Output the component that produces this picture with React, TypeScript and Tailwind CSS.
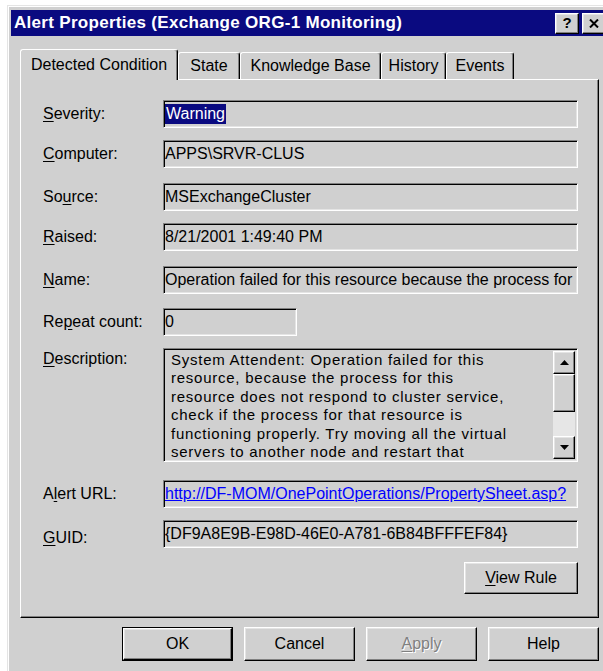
import React from "react";

const FACE = "bg-[#d0d0d0]";
const RAISED =
  "border border-t-white border-l-white border-b-black border-r-black shadow-[inset_-1px_-1px_0_#808080,inset_1px_1px_0_#e4e4e4]";
const SUNKEN =
  "border border-t-[#808080] border-l-[#808080] border-b-white border-r-white shadow-[inset_1px_1px_0_#000,inset_-1px_-1px_0_#e4e4e4]";

function Key({ children }: { children: React.ReactNode }) {
  return <span className="underline underline-offset-[2px]">{children}</span>;
}

function Field({
  children,
  className = "",
}: {
  children: React.ReactNode;
  className?: string;
}) {
  return (
    <div
      className={`flex h-[28px] items-center overflow-hidden whitespace-nowrap px-[1px] ${SUNKEN} ${className}`}
    >
      {children}
    </div>
  );
}

function Row({
  label,
  children,
  className = "",
}: {
  label: React.ReactNode;
  children: React.ReactNode;
  className?: string;
}) {
  return (
    <div className={`flex items-center ${className}`}>
      <div className="w-[120px] shrink-0">{label}</div>
      {children}
    </div>
  );
}

function Arrow({ down = false }: { down?: boolean }) {
  return (
    <svg width="9" height="5" viewBox="0 0 9 5" className={down ? "rotate-180" : ""}>
      <polygon points="4.5,0 9,5 0,5" fill="#000" />
    </svg>
  );
}

function ScrollBar() {
  return (
    <div className="flex w-[22px] shrink-0 flex-col">
      <div className={`flex h-[23px] items-center justify-center ${FACE} ${RAISED}`}>
        <Arrow />
      </div>
      <div className={`h-[38px] ${FACE} ${RAISED}`} />
      <div className="flex-1 bg-[#e6e6e6]" />
      <div className={`flex h-[23px] items-center justify-center ${FACE} ${RAISED}`}>
        <Arrow down />
      </div>
    </div>
  );
}

const DESCRIPTION = [
  "System Attendent: Operation failed for this",
  "resource, because the process for this",
  "resource does not respond to cluster service,",
  "check if the process for that resource is",
  "functioning properly. Try moving all the virtual",
  "servers to another node and restart that",
];

const TABS = [
  { name: "State", w: "w-[62px]" },
  { name: "Knowledge Base", w: "w-[141px]" },
  { name: "History", w: "w-[65px]" },
  { name: "Events", w: "w-[68px]" },
];

function DialogButton({
  children,
  isDefault = false,
  disabled = false,
}: {
  children: React.ReactNode;
  isDefault?: boolean;
  disabled?: boolean;
}) {
  const label = (
    <span
      className={
        disabled ? "text-[#808080] [text-shadow:1px_1px_0_#fff]" : "text-black"
      }
    >
      {children}
    </span>
  );
  if (isDefault) {
    return (
      <div className="h-[34px] w-[111px] border border-black">
        <div className={`flex h-full items-center justify-center ${FACE} ${RAISED}`}>
          {label}
        </div>
      </div>
    );
  }
  return (
    <div className={`flex h-[34px] w-[111px] items-center justify-center ${FACE} ${RAISED}`}>
      {label}
    </div>
  );
}

export default function App() {
  return (
    <div className="h-[671px] w-[603px] overflow-hidden bg-white font-['Liberation_Sans',Arial,sans-serif] text-[16px] leading-[20px] text-black">
      <div
        className={`ml-[7px] mt-[5px] h-[700px] w-[620px] border-l border-t border-[#e4e4e4] pl-[3px] pt-[4px] shadow-[inset_1px_1px_0_#fff] ${FACE}`}
      >
        {/* caption */}
        <div className="flex h-[26px] w-[597px] items-center justify-between bg-[#0a0a80] pl-[3px] pr-[2px]">
          <span className="text-[17px] font-bold tracking-[0.3px] text-white">
            Alert Properties (Exchange ORG-1 Monitoring)
          </span>
          <div className="flex gap-[3px]">
            <div
              className={`flex h-[21px] w-[24px] items-center justify-center text-[15px] font-bold ${FACE} ${RAISED}`}
            >
              ?
            </div>
            <div className={`flex h-[21px] w-[24px] items-center justify-center ${FACE} ${RAISED}`}>
              <svg width="10" height="9" viewBox="0 0 10 9">
                <path d="M1 0.5 L9 8.5 M9 0.5 L1 8.5" stroke="#000" strokeWidth="2" />
              </svg>
            </div>
          </div>
        </div>

        {/* tab strip */}
        <div className="ml-[9px] mt-[13px] w-[579px]">
          <div className="flex h-[30px] items-end">
            <div
              className={`relative z-10 -mb-[1px] flex h-[31px] w-[158px] items-start justify-center rounded-t-[3px] border-l border-t border-r border-l-white border-t-white border-r-black pt-[5px] shadow-[inset_-1px_0_0_#808080] ${FACE}`}
            >
              Detected Condition
            </div>
            {TABS.map((t) => (
              <div
                key={t.name}
                className={`flex h-[27px] items-start justify-center rounded-t-[3px] border-l border-t border-r border-l-white border-t-white border-r-black pt-[3px] shadow-[inset_-1px_0_0_#808080] ${t.w} ${FACE}`}
              >
                {t.name}
              </div>
            ))}
          </div>

          {/* page */}
          <div
            className={`h-[539px] border border-t-white border-l-white border-b-black border-r-black pl-[22px] pr-[20px] pt-[20px] shadow-[inset_-1px_-1px_0_#808080] ${FACE}`}
          >
            <Row label={<><Key>S</Key>everity:</>}>
              <Field className="flex-1">
                <span className="bg-[#0a0a80] px-[1px] leading-[20px] text-white">Warning</span>
              </Field>
            </Row>
            <Row className="mt-[12px]" label={<><Key>C</Key>omputer:</>}>
              <Field className="flex-1">APPS\SRVR-CLUS</Field>
            </Row>
            <Row className="mt-[15px]" label={<>So<Key>u</Key>rce:</>}>
              <Field className="flex-1">MSExchangeCluster</Field>
            </Row>
            <Row className="mt-[12px]" label={<><Key>R</Key>aised:</>}>
              <Field className="flex-1">8/21/2001 1:49:40 PM</Field>
            </Row>
            <Row className="mt-[15px]" label={<><Key>N</Key>ame:</>}>
              <Field className="flex-1">
                Operation failed for this resource because the process for
              </Field>
            </Row>
            <Row className="mt-[14px]" label={<>Re<Key>p</Key>eat count:</>}>
              <Field className="w-[134px]">0</Field>
            </Row>
            <div className="mt-[12px] flex items-start">
              <div className="w-[120px] shrink-0 pt-[1px]">
                <Key>D</Key>escription:
              </div>
              <div className={`flex h-[114px] flex-1 overflow-hidden p-[2px] ${SUNKEN}`}>
                <div className="flex-1 overflow-hidden pl-[5px] text-[15px] leading-[18.4px] tracking-[0.75px]">
                  {DESCRIPTION.map((line) => (
                    <div key={line} className="whitespace-nowrap">
                      {line}
                    </div>
                  ))}
                </div>
                <ScrollBar />
              </div>
            </div>
            <Row className="mt-[18px]" label={<>A<Key>l</Key>ert URL:</>}>
              <Field className="flex-1">
                <span className="text-[#0000ff] underline">
                  http://DF-MOM/OnePointOperations/PropertySheet.asp?
                </span>
              </Field>
            </Row>
            <Row
              className="mt-[12px]"
              label={
                <span className="relative top-[4px]">
                  <Key>G</Key>UID:
                </span>
              }
            >
              <Field className="flex-1">{"{DF9A8E9B-E98D-46E0-A781-6B84BFFFEF84}"}</Field>
            </Row>
            <div className="mt-[14px] flex justify-end">
              <div className={`flex h-[32px] w-[114px] items-center justify-center ${FACE} ${RAISED}`}>
                <span>
                  <Key>V</Key>iew Rule
                </span>
              </div>
            </div>
          </div>
        </div>

        {/* dialog buttons */}
        <div className="ml-[111px] mt-[9px] flex gap-[11px]">
          <DialogButton isDefault>OK</DialogButton>
          <DialogButton>Cancel</DialogButton>
          <DialogButton disabled>
            <Key>A</Key>pply
          </DialogButton>
          <DialogButton>Help</DialogButton>
        </div>
      </div>
    </div>
  );
}
